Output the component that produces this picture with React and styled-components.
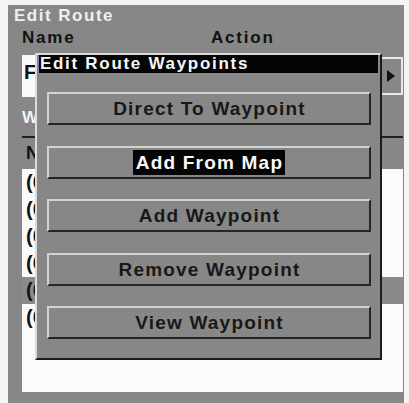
import styled, { createGlobalStyle } from "styled-components";

const GlobalStyle = createGlobalStyle`
  html, body {
    margin: 0;
    padding: 0;
    background: #f4f4f4;
    overflow: hidden;
  }
  body {
    font-family: "Liberation Sans", Arial, sans-serif;
    font-weight: bold;
  }
`;

const Window = styled.div`
  position: relative;
  margin: 5px 5px 0 8px;
  height: 398px;
  background: #878787;
  display: flex;
  flex-direction: column;
  overflow: hidden;
`;

const WindowTitle = styled.div`
  padding: 2px 0 0 6px;
  font-size: 17px;
  line-height: 18px;
  letter-spacing: 1.5px;
  color: #efefef;
`;

const Body = styled.div`
  flex: 1;
  display: flex;
  flex-direction: column;
  padding: 0 1px 11px 14px;
`;

const LabelRow = styled.div`
  display: grid;
  grid-template-columns: 189px 1fr;
  margin-top: 4px;
  font-size: 17px;
  line-height: 18px;
  letter-spacing: 1.8px;
  color: #111;
`;

const FieldRow = styled.div`
  display: grid;
  grid-template-columns: 180px 1fr;
  column-gap: 9px;
  margin-top: 8px;
  height: 42px;
`;

const NameField = styled.div`
  background: #fafafa;
  padding: 6px 2px 0;
  font-size: 20px;
  color: #111;
`;

const ActionField = styled.div`
  display: flex;
  align-items: center;
  justify-content: flex-end;
  margin: 2px 0;
  padding-right: 6px;
  border: 2px solid #e8e8e8;
  border-left-color: #303030;
  font-size: 16px;
  color: #111;
`;

const Arrow = styled.span`
  width: 0;
  height: 0;
  border-top: 6px solid transparent;
  border-bottom: 6px solid transparent;
  border-left: 8px solid #111;
`;

const SectionLabel = styled.div`
  margin-top: 12px;
  font-size: 17px;
  line-height: 18px;
  letter-spacing: 1.5px;
  color: #f4f4f4;
`;

const List = styled.div`
  flex: 1;
  margin-top: 9px;
  border-top: 2px solid #222;
  background: #fbfbfb;
  display: flex;
  flex-direction: column;
`;

const ListHeader = styled.div`
  height: 31px;
  display: flex;
  align-items: center;
  gap: 150px;
  padding-left: 4px;
  background: #878787;
  font-size: 18px;
  color: #111;
`;

const ListRow = styled.div`
  height: 27px;
  display: flex;
  align-items: center;
  padding-left: 4px;
  background: ${(p) => (p.$selected ? "#8a8a8a" : "transparent")};
  font-size: 20px;
  color: #111;
`;

const Dialog = styled.div`
  position: absolute;
  left: 27px;
  top: 48px;
  width: 339px;
  height: 303px;
  background: #878787;
  border-top: 2px solid #dcdcdc;
  border-left: 2px solid #dcdcdc;
  border-right: 2px solid #1c1c1c;
  border-bottom: 2px solid #1c1c1c;
  padding: 0 2px;
  display: flex;
  flex-direction: column;
`;

const DialogTitle = styled.div`
  height: 18px;
  background: #050505;
  color: #f6f6f6;
  font-size: 17px;
  line-height: 18px;
  letter-spacing: 1.7px;
  padding-left: 1px;
`;

const ButtonList = styled.div`
  display: flex;
  flex-direction: column;
  gap: 20.5px;
  padding: 19px 7px 0 8px;
`;

const MenuButton = styled.div`
  height: 33px;
  box-sizing: border-box;
  display: flex;
  align-items: center;
  justify-content: center;
  background: #878787;
  border-top: 2px solid #d2d2d2;
  border-left: 2px solid #d2d2d2;
  border-right: 2px solid #262626;
  border-bottom: 2px solid #262626;
  font-size: 19px;
  letter-spacing: 1.2px;
  color: #181818;
`;

const ButtonLabel = styled.span`
  padding: 0 2px 0 3px;
  line-height: 25px;
  background: ${(p) => (p.$active ? "#050505" : "transparent")};
  color: ${(p) => (p.$active ? "#f8f8f8" : "inherit")};
`;

const rows = [
  "(001) Waypoint 001",
  "(002) Waypoint 002",
  "(003) Waypoint 003",
  "(004) Waypoint 004",
  "(005) Waypoint 005",
  "(006) Waypoint 006",
];

const actions = [
  "Direct To Waypoint",
  "Add From Map",
  "Add Waypoint",
  "Remove Waypoint",
  "View Waypoint",
];

export default function App() {
  return (
    <>
      <GlobalStyle />
      <Window>
        <WindowTitle>Edit Route</WindowTitle>
        <Body>
          <LabelRow>
            <span>Name</span>
            <span>Action</span>
          </LabelRow>
          <FieldRow>
            <NameField>Fishing Trip</NameField>
            <ActionField>
              <Arrow />
            </ActionField>
          </FieldRow>
          <SectionLabel>Waypoints</SectionLabel>
          <List>
            <ListHeader>
              <span>Name</span>
              <span>Distance</span>
            </ListHeader>
            {rows.map((r, i) => (
              <ListRow key={r} $selected={i === 4}>
                {r}
              </ListRow>
            ))}
          </List>
        </Body>
        <Dialog>
          <DialogTitle>Edit Route Waypoints</DialogTitle>
          <ButtonList>
            {actions.map((a, i) => (
              <MenuButton key={a}>
                <ButtonLabel $active={i === 1}>{a}</ButtonLabel>
              </MenuButton>
            ))}
          </ButtonList>
        </Dialog>
      </Window>
    </>
  );
}
